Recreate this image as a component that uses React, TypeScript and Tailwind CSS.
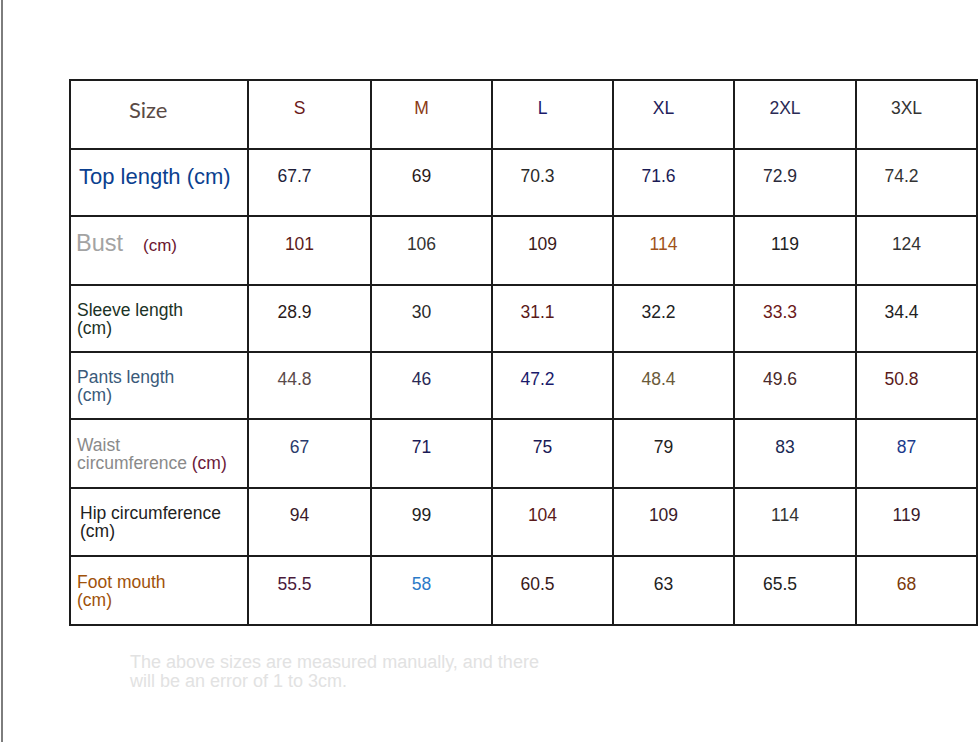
import React from "react";

type Cell = { v: string; c: string };

interface RowData {
  label: React.ReactNode;
  cells: Cell[];
  pad: string;
}

const sans = "font-['Liberation_Sans',Arial,sans-serif]";

const headCells: Cell[] = [
  { v: "S", c: "text-[#6b1a1a]" },
  { v: "M", c: "text-[#8b3a14]" },
  { v: "L", c: "text-[#1a1a6b]" },
  { v: "XL", c: "text-[#22205a]" },
  { v: "2XL", c: "text-[#2a2a55]" },
  { v: "3XL", c: "text-[#333333]" },
];

const rows: RowData[] = [
  {
    label: <span className="text-[22px] text-[#0b3f8f]">Top length (cm)</span>,
    pad: "pb-[12px] pl-[8px]",
    cells: [
      { v: "67.7", c: "text-[#1f1f3a]" },
      { v: "69", c: "text-[#2a1a1a]" },
      { v: "70.3", c: "text-[#2a2a2a]" },
      { v: "71.6", c: "text-[#1a1a55]" },
      { v: "72.9", c: "text-[#2a2a3a]" },
      { v: "74.2", c: "text-[#333333]" },
    ],
  },
  {
    label: (
      <span className="flex items-baseline">
        <span className="text-[23.5px] text-[#a3a3a3]">Bust</span>
        <span className="ml-[20px] text-[17px] text-[#6b1530]">(cm)</span>
      </span>
    ),
    pad: "pb-[12px] pl-[5px]",
    cells: [
      { v: "101", c: "text-[#5a1a1a]" },
      { v: "106", c: "text-[#333333]" },
      { v: "109", c: "text-[#3a1a1a]" },
      { v: "114", c: "text-[#a0521a]" },
      { v: "119", c: "text-[#222222]" },
      { v: "124", c: "text-[#333333]" },
    ],
  },
  {
    label: (
      <span className="text-[#1c3326]">
        Sleeve length
        <br />
        (cm)
      </span>
    ),
    pad: "pl-[6px]",
    cells: [
      { v: "28.9", c: "text-[#2a1a1a]" },
      { v: "30", c: "text-[#2a2a2a]" },
      { v: "31.1", c: "text-[#5a1a1a]" },
      { v: "32.2", c: "text-[#222222]" },
      { v: "33.3", c: "text-[#6b1a1a]" },
      { v: "34.4", c: "text-[#222222]" },
    ],
  },
  {
    label: (
      <span className="text-[#3a5a7a]">
        Pants length
        <br />
        (cm)
      </span>
    ),
    pad: "pl-[6px]",
    cells: [
      { v: "44.8", c: "text-[#5a4a4a]" },
      { v: "46", c: "text-[#2a2a55]" },
      { v: "47.2", c: "text-[#1a1a6b]" },
      { v: "48.4", c: "text-[#6b5a3a]" },
      { v: "49.6", c: "text-[#4a2a2a]" },
      { v: "50.8", c: "text-[#5a1a1a]" },
    ],
  },
  {
    label: (
      <span className="text-[#8a8a8a]">
        Waist
        <br />
        circumference <span className="text-[#6b1a3a]">(cm)</span>
      </span>
    ),
    pad: "pl-[6px]",
    cells: [
      { v: "67", c: "text-[#2a3a6b]" },
      { v: "71", c: "text-[#1a1a55]" },
      { v: "75", c: "text-[#1a1a55]" },
      { v: "79", c: "text-[#222222]" },
      { v: "83", c: "text-[#1a2a55]" },
      { v: "87", c: "text-[#1a3a8b]" },
    ],
  },
  {
    label: (
      <span className="text-[#222222]">
        Hip circumference
        <br />
        (cm)
      </span>
    ),
    pad: "pl-[9px]",
    cells: [
      { v: "94", c: "text-[#3a1a2a]" },
      { v: "99", c: "text-[#222222]" },
      { v: "104", c: "text-[#5a1a1a]" },
      { v: "109", c: "text-[#3a1a2a]" },
      { v: "114", c: "text-[#333333]" },
      { v: "119", c: "text-[#3a1a2a]" },
    ],
  },
  {
    label: (
      <span className="text-[#a0520a]">
        Foot mouth
        <br />
        (cm)
      </span>
    ),
    pad: "pl-[6px]",
    cells: [
      { v: "55.5", c: "text-[#4a1a3a]" },
      { v: "58", c: "text-[#2a7ac8]" },
      { v: "60.5", c: "text-[#3a1a1a]" },
      { v: "63", c: "text-[#222222]" },
      { v: "65.5", c: "text-[#222222]" },
      { v: "68", c: "text-[#7a3a0a]" },
    ],
  },
];

const cellBase = "border-r-2 border-b-2 border-[#1c1c1c] flex items-center";

// decimals sit a little further left than whole numbers in the original
const ValueCell = ({ cell }: { cell: Cell }) => (
  <div
    className={`${cellBase} justify-center pb-[13px] text-[17.5px] ${
      cell.v.includes(".") ? "pr-[30px]" : "pr-5"
    } ${cell.c}`}
  >
    {cell.v}
  </div>
);

export default function App() {
  return (
    <div className={`ml-px h-[742px] w-[979px] overflow-hidden border-l-2 border-[#7d7d7d] bg-white ${sans}`}>
      <div className="ml-[66px] mt-[79px] grid w-max grid-cols-[178px_123px_121px_121px_121px_122px_121px] grid-rows-[69px_67px_69px_67px_67px_69px_68px_69px] border-l-2 border-t-2 border-[#1c1c1c]">
        {/* header */}
        <div className={`${cellBase} pl-[58px] pb-[10px] font-['Lato',sans-serif] text-[22px] text-[#5a4a45]`}>
          Size
        </div>
        {headCells.map((c, i) => (
          <ValueCell key={i} cell={c} />
        ))}

        {rows.map((r, ri) => (
          <React.Fragment key={ri}>
            <div className={`${cellBase} text-[17.5px] leading-[18px] ${r.pad}`}>{r.label}</div>
            {r.cells.map((c, ci) => (
              <ValueCell key={ci} cell={c} />
            ))}
          </React.Fragment>
        ))}
      </div>

      <p className="ml-[127px] mt-[27px] text-[18px] leading-[19px] text-[#e2e2e2]">
        The above sizes are measured manually, and there
        <br />
        will be an error of 1 to 3cm.
      </p>
    </div>
  );
}
